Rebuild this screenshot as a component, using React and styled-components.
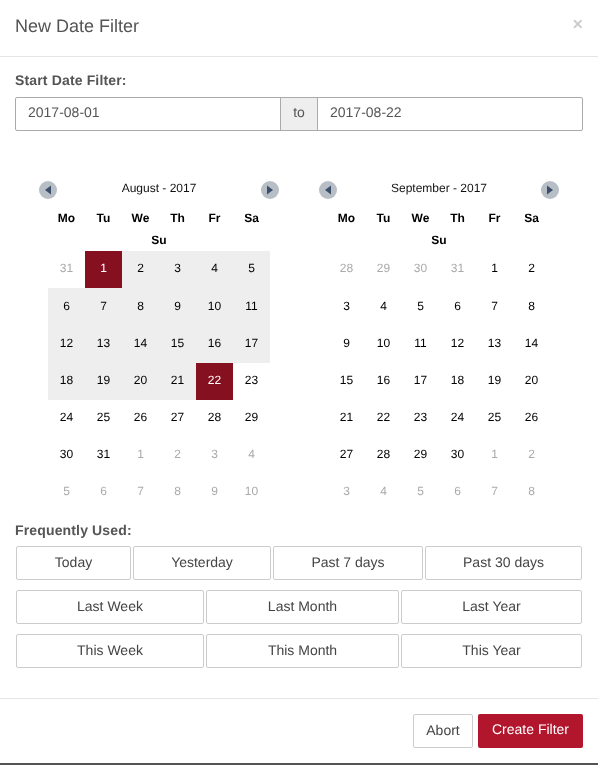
import React from 'react';
import styled, { createGlobalStyle } from 'styled-components';

const GlobalStyle = createGlobalStyle`
  html, body { margin: 0; padding: 0; background: #fff; }
  body { font-family: "Liberation Sans", Arial, sans-serif; text-rendering: geometricPrecision; }
`;

const august = {
    title: 'August - 2017',
    days: [
        ['31', 'm'], ['1', 's'], ['2', 'r'], ['3', 'r'], ['4', 'r'], ['5', 'r'],
        ['6', 'r'], ['7', 'r'], ['8', 'r'], ['9', 'r'], ['10', 'r'], ['11', 'r'],
        ['12', 'r'], ['13', 'r'], ['14', 'r'], ['15', 'r'], ['16', 'r'], ['17', 'r'],
        ['18', 'r'], ['19', 'r'], ['20', 'r'], ['21', 'r'], ['22', 's'], ['23', ''],
        ['24', ''], ['25', ''], ['26', ''], ['27', ''], ['28', ''], ['29', ''],
        ['30', ''], ['31', ''], ['1', 'm'], ['2', 'm'], ['3', 'm'], ['4', 'm'],
        ['5', 'm'], ['6', 'm'], ['7', 'm'], ['8', 'm'], ['9', 'm'], ['10', 'm'],
    ],
};

const september = {
    title: 'September - 2017',
    days: [
        ['28', 'm'], ['29', 'm'], ['30', 'm'], ['31', 'm'], ['1', ''], ['2', ''],
        ['3', ''], ['4', ''], ['5', ''], ['6', ''], ['7', ''], ['8', ''],
        ['9', ''], ['10', ''], ['11', ''], ['12', ''], ['13', ''], ['14', ''],
        ['15', ''], ['16', ''], ['17', ''], ['18', ''], ['19', ''], ['20', ''],
        ['21', ''], ['22', ''], ['23', ''], ['24', ''], ['25', ''], ['26', ''],
        ['27', ''], ['28', ''], ['29', ''], ['30', ''], ['1', 'm'], ['2', 'm'],
        ['3', 'm'], ['4', 'm'], ['5', 'm'], ['6', 'm'], ['7', 'm'], ['8', 'm'],
    ],
};

const weekdays = ['Mo', 'Tu', 'We', 'Th', 'Fr', 'Sa'];

function NavButton({ dir }) {
    return (
        <NavCircle>
            <svg width="8" height="10" viewBox="0 0 8 10">
                {dir === 'prev'
                    ? <polygon points="7,0.5 7,9.5 1,5" fill="#3b4f6b" />
                    : <polygon points="1,0.5 1,9.5 7,5" fill="#3b4f6b" />}
            </svg>
        </NavCircle>
    );
}

function Calendar({ month }) {
    return (
        <CalendarBox>
            <CalendarHead>
                <NavButton dir="prev" />
                <MonthTitle>{month.title}</MonthTitle>
                <NavButton dir="next" />
            </CalendarHead>
            <WeekRow>
                {weekdays.map(d => <WeekDay key={d}>{d}</WeekDay>)}
            </WeekRow>
            <Sunday>Su</Sunday>
            <DayGrid>
                {month.days.map(([label, kind], i) => (
                    <Day key={i} kind={kind}>{label}</Day>
                ))}
            </DayGrid>
        </CalendarBox>
    );
}

export default function App() {
    return (
        <>
            <GlobalStyle />
            <Modal>
                <Header>
                    <Title>New Date Filter</Title>
                    <Close>×</Close>
                </Header>
                <Body>
                    <Label>Start Date Filter:</Label>
                    <InputGroup>
                        <DateInput>2017-08-01</DateInput>
                        <Addon>to</Addon>
                        <DateInput>2017-08-22</DateInput>
                    </InputGroup>
                    <Calendars>
                        <Calendar month={august} />
                        <Calendar month={september} />
                    </Calendars>
                    <FrequentLabel>Frequently Used:</FrequentLabel>
                    <PresetRow columns="115px 138px 150px 157px">
                        <Preset>Today</Preset>
                        <Preset>Yesterday</Preset>
                        <Preset>Past 7 days</Preset>
                        <Preset>Past 30 days</Preset>
                    </PresetRow>
                    <PresetRow columns="188px 193px 181px">
                        <Preset>Last Week</Preset>
                        <Preset>Last Month</Preset>
                        <Preset>Last Year</Preset>
                    </PresetRow>
                    <PresetRow columns="188px 193px 181px">
                        <Preset>This Week</Preset>
                        <Preset>This Month</Preset>
                        <Preset>This Year</Preset>
                    </PresetRow>
                </Body>
                <Footer>
                    <AbortButton>Abort</AbortButton>
                    <CreateButton>Create Filter</CreateButton>
                </Footer>
            </Modal>
        </>
    );
}

const Modal = styled.div`
    width: 598px;
    height: 765px;
    box-sizing: border-box;
    border-bottom: 2px solid #555;
    display: flex;
    flex-direction: column;
    overflow: hidden;
    will-change: transform;
`;

const Header = styled.div`
    height: 57px;
    box-sizing: border-box;
    border-bottom: 1px solid #e5e5e5;
    padding: 15px 15px 0;
    display: flex;
    justify-content: space-between;
    align-items: flex-start;
`;

const Title = styled.div`
    font-size: 18px;
    line-height: 22px;
    color: #555;
`;

const Close = styled.div`
    font-size: 18px;
    font-weight: bold;
    line-height: 18px;
    color: #000;
    opacity: 0.2;
`;

const Body = styled.div`
    flex: 1;
    padding: 15px 15px 0;
`;

const Label = styled.div`
    font-size: 14px;
    font-weight: bold;
    line-height: 16px;
    letter-spacing: 0.15px;
    color: #555;
    margin-bottom: 9px;
`;

const InputGroup = styled.div`
    display: grid;
    grid-template-columns: 264px 38px 264px;
    width: 568px;
    height: 34px;
    box-sizing: border-box;
    border: 1px solid #aaa;
    border-radius: 2px;
`;

const DateInput = styled.div`
    padding: 0 12px;
    font-size: 14px;
    line-height: 29px;
    color: #555;
`;

const Addon = styled.div`
    background: #eee;
    border-left: 1px solid #aaa;
    border-right: 1px solid #aaa;
    font-size: 14px;
    line-height: 29px;
    text-align: center;
    color: #555;
`;

const Calendars = styled.div`
    display: flex;
    gap: 58px;
    padding: 50px 0 0 33px;
`;

const CalendarBox = styled.div`
    width: 222px;
`;

const CalendarHead = styled.div`
    position: relative;
    display: flex;
    justify-content: space-between;
    align-items: center;
    height: 18px;
    margin: 0 -9px;
`;

const NavCircle = styled.div`
    width: 18px;
    height: 18px;
    border-radius: 50%;
    background: #b7bec6;
    display: flex;
    align-items: center;
    justify-content: center;
`;

const MonthTitle = styled.div`
    font-size: 12px;
    line-height: 14px;
    color: #111;
    margin-top: -4px;
`;

const WeekRow = styled.div`
    display: grid;
    grid-template-columns: repeat(6, 37px);
    margin-top: 12px;
`;

const WeekDay = styled.div`
    font-size: 12px;
    font-weight: bold;
    line-height: 14px;
    text-align: center;
    color: #000;
`;

const Sunday = styled(WeekDay)`
    margin-top: 8px;
    margin-bottom: 4px;
`;

const DayGrid = styled.div`
    display: grid;
    grid-template-columns: repeat(6, 37px);
    grid-template-rows: 37px 38px repeat(5, 37px);
`;

const dayBackground = { s: '#851020', r: '#eeeeee' };
const dayColor = { s: '#fff', m: '#aaa' };

const Day = styled.div.withConfig({ shouldForwardProp: p => p !== 'kind' })`
    display: flex;
    align-items: center;
    justify-content: center;
    padding-bottom: 3px;
    box-sizing: border-box;
    font-size: 12px;
    background: ${props => dayBackground[props.kind] || 'transparent'};
    color: ${props => dayColor[props.kind] || '#000'};
`;

const FrequentLabel = styled(Label)`
    margin-top: 11px;
    margin-bottom: 0;
    height: 24px;
    line-height: 16px;
`;

const PresetRow = styled.div.withConfig({ shouldForwardProp: p => p !== 'columns' })`
    display: grid;
    grid-template-columns: ${props => props.columns};
    column-gap: 2px;
    padding-left: 1px;
    margin-bottom: 10px;
`;

const Preset = styled.div`
    height: 34px;
    box-sizing: border-box;
    border: 1px solid #ccc;
    border-radius: 2px;
    font-size: 14px;
    line-height: 31px;
    text-align: center;
    color: #444;
`;

const Footer = styled.div`
    height: 65px;
    box-sizing: border-box;
    border-top: 1px solid #e5e5e5;
    padding: 15px 15px 0;
    display: flex;
    justify-content: flex-end;
    gap: 5px;
`;

const FooterButton = styled.div`
    height: 34px;
    box-sizing: border-box;
    border-radius: 2px;
    font-size: 14px;
    line-height: 31px;
    text-align: center;
`;

const AbortButton = styled(FooterButton)`
    width: 60px;
    border: 1px solid #ccc;
    color: #444;
`;

const CreateButton = styled(FooterButton)`
    width: 105px;
    background: #b2162c;
    color: #fff;
`;
